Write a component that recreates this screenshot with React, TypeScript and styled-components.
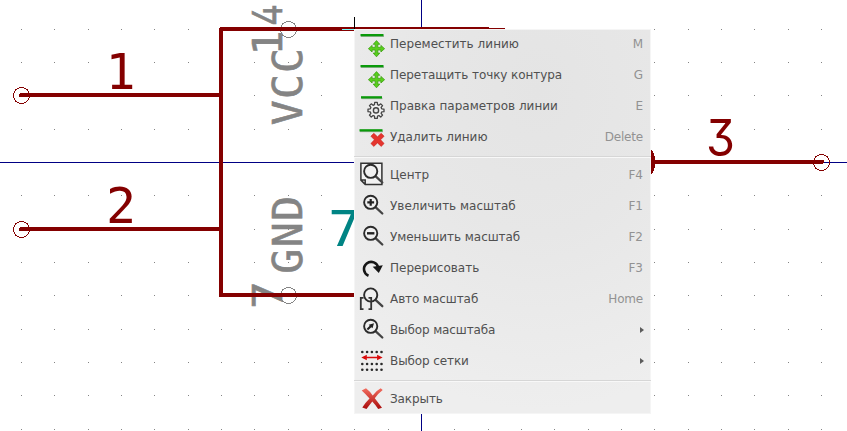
import React from "react";
import styled, { createGlobalStyle } from "styled-components";

const GlobalStyle = createGlobalStyle`
  body { margin: 0; background: #fff; overflow: hidden; }
`;

const Editor = styled.main`
  position: relative;
  width: 847px;
  height: 431px;
  overflow: hidden;
  background: #fff;
`;

const Canvas = styled.svg`
  display: block;
  width: 847px;
  height: 431px;
`;

const PinText = styled.text<{ $color?: string; $small?: boolean; $sans?: boolean }>`
  font-family: ${(p) => (p.$sans ? 'Inter, "DejaVu Sans", sans-serif' : '"DejaVu Sans Mono", monospace')};
  font-feature-settings: "cv09", "cv02";
  font-size: ${(p) => (p.$small ? 41.5 : 50)}px;
  font-weight: 400;
  fill: ${(p) => p.$color ?? "#840000"};
  stroke: ${(p) => (p.$small ? p.$color : "none")};
  stroke-width: 0.6px;
`;

const Menu = styled.nav`
  position: absolute;
  left: 354px;
  top: 29px;
  width: 297px;
  height: 385px;
  box-sizing: border-box;
  overflow: hidden;
  display: flex;
  flex-direction: column;
  background: radial-gradient(ellipse 270px 320px at 62% 16%, #e4e4e4 0%, #e7e7e7 45%, #eeeeee 100%);
  box-shadow: inset 0 1px #f5f5f5, inset -1px 0 #f5f5f5, inset 1px 0 #f5f5f5, inset 0 -1px #f5f5f5;
`;

const Item = styled.div`
  flex: 0 0 31px;
  display: flex;
  align-items: center;
  box-sizing: border-box;
  padding: 0 8px 1px 6px;
  font: 12px/30px "DejaVu Sans", sans-serif;
  color: #505050;
  white-space: nowrap;
`;

const Label = styled.span<{ $tracking?: number }>`
  flex: 1;
  margin-left: 6px;
  letter-spacing: ${(p) => p.$tracking ?? 0}px;
`;

const Shortcut = styled.span<{ $tight: boolean }>`
  color: #929292;
  letter-spacing: ${(p) => (p.$tight ? -0.2 : 0)}px;
`;

const Submenu = styled.i`
  margin: 0 -1px 0 0;
  border: solid transparent;
  border-width: 3.5px 0 3.5px 4px;
  border-left-color: #5c5c5c;
`;

const Separator = styled.hr`
  flex: 0 0 2px;
  box-sizing: border-box;
  width: 297px;
  margin: 3px 0 2px;
  border: 0;
  border-top: 1px solid #d6d6d6;
  border-bottom: 1px solid #f8f8f8;
`;

const Icon = styled.svg`
  flex: 0 0 24px;
  width: 24px;
  height: 24px;
  overflow: visible;
`;

type IconName =
  | "move" | "drag" | "edit" | "delete" | "center" | "zoomIn" | "zoomOut"
  | "redraw" | "auto" | "zoom" | "grid" | "close";

const Strip = ({ x = 0.5, y = 2, w = 23 }) => (
  <>
    <rect x={x + 0.5} y={y + 1.5} width={w} height="1.5" fill="#a9b5a9" />
    <rect x={x} y={y} width={w} height="2.3" fill="#0a9a0a" />
  </>
);

const Arrows = () => (
  <path
    d="M16.5 8.6l3.3 3.7h-2v3.1h3.1v-2l3.7 3.3-3.7 3.3v-2h-3.1v3.1h2l-3.3 3.7-3.3-3.7h2V18h-3.1v2l-3.7-3.3 3.7-3.3v2h3.1v-3.1h-2z"
    fill="#58cf1c" stroke="#3d9f13" strokeWidth=".8" strokeLinejoin="round"
  />
);

const Lens = ({ y = 8.3 }) => (
  <>
    <path d={`M15.5 ${y + 4.9}L22.3 ${y + 11.2}`} stroke="#444" strokeWidth="2.3" strokeLinecap="round" />
    <circle cx="10.7" cy={y} r="6.6" fill="#f0f0f0" stroke="#2b2b2b" strokeWidth="1.9" />
  </>
);

const gearPoints = Array.from({ length: 8 }, (_, i) =>
  [[-15, 5.9], [-9, 8.1], [9, 8.1], [15, 5.9]].map(([offset, r]) => {
    const a = ((i * 45 + offset) * Math.PI) / 180;
    return `${(16 + r * Math.cos(a)).toFixed(2)},${(16.4 + r * Math.sin(a)).toFixed(2)}`;
  }).join(" ")
).join(" ");

const drawings: Record<IconName, React.ReactNode> = {
  move: <><Strip /><Arrows /></>,
  drag: <><Strip /><Arrows /></>,
  edit: (
    <>
      <Strip x={1} w={21} y={2.2} />
      <polygon points={gearPoints} fill="#f0f0f0" stroke="#444" strokeWidth="1.3" strokeLinejoin="round" />
      <circle cx="16" cy="16.4" r="2.6" fill="#e9e9e9" stroke="#444" strokeWidth="1.4" />
    </>
  ),
  delete: (
    <>
      <Strip x={-0.5} y={4.2} />
      <path d="M13.8 8.3l3.7 3.5 3.7-3.5 2.9 2.9-3.5 3.6 3.5 3.7-2.9 2.9-3.7-3.5-3.7 3.5-2.9-2.9 3.5-3.7-3.5-3.6z" fill="#e4352e" stroke="#c9211c" strokeWidth=".6" strokeLinejoin="round" />
    </>
  ),
  center: (
    <>
      <path d="M.9.2h21v21.2H5.2L.9 17.1zM.9 17.1h4.3v4.3" fill="#f2f2f2" stroke="#333" strokeWidth="1.5" />
      <Lens />
    </>
  ),
  zoomIn: <><Lens /><path d="M7.3 8.3h6.8M10.7 4.9v6.8" stroke="#222" strokeWidth="2.2" /></>,
  zoomOut: <><Lens /><path d="M7 8.3h7.4" stroke="#222" strokeWidth="2.4" /></>,
  redraw: (
    <>
      <path d="M8.5 19.8A7.2 7.2 0 1 1 18.3 12" fill="none" stroke="#161616" strokeWidth="2.6" />
      <path d="M12.7 10.7L22.8 9.2 18.8 17z" fill="#161616" />
    </>
  ),
  auto: (
    <>
      <Lens y={8} />
      <path d="M3.5 10.8H.8v11.3h2.7M8.5 10.8h2.7v11.3H8.5" fill="none" stroke="#333" strokeWidth="1.8" />
    </>
  ),
  zoom: <><Lens /><path d="M14 5.2l-1.5 5-1.2-1-3.2 3-1.4-1.5 3-2.9-1-1.1z" fill="#222" /></>,
  grid: (
    <>
      {[3, 15, 20.8].map((y) => [2.3, 7.1, 11.9, 16.7, 21.5].map((x) => <circle key={`${x}-${y}`} cx={x} cy={y} r="1.3" fill="#2a2a2a" />))}
      <path d="M1.3 8.5L6.8 5.7v2h10.3v-2l5.5 2.8-5.5 2.8v-2H6.8v2z" fill="#d90b0b" />
    </>
  ),
  close: (
    <>
      <defs>
        <linearGradient id="closeRed" x1="0" y1="0" x2="0" y2="1">
          <stop offset="0" stopColor="#f36d5f" />
          <stop offset="1" stopColor="#a90c0c" />
        </linearGradient>
      </defs>
      <path d="M1.7 3.4L6 1.2Q10 4.3 12.7 8.5 16.5 3.5 20.7 1.3L22.7 3Q18 6.5 14.8 11.3 18 15.5 22 20.8L18.2 22Q15.3 17.5 12.3 14.4 9 18.5 6.5 22L2.3 20.6Q5.6 15.5 9.5 11.6 6 7.2 1.7 3.4z" fill="url(#closeRed)" />
    </>
  ),
};

type Entry = { icon: IconName; label: string; keys?: string; submenu?: boolean; tracking?: number };

const groups: Entry[][] = [
  [
    { icon: "move", label: "Переместить линию", keys: "M", tracking: 0.04 },
    { icon: "drag", label: "Перетащить точку контура", keys: "G", tracking: -0.07 },
    { icon: "edit", label: "Правка параметров линии", keys: "E" },
    { icon: "delete", label: "Удалить линию", keys: "Delete" },
  ],
  [
    { icon: "center", label: "Центр", keys: "F4" },
    { icon: "zoomIn", label: "Увеличить масштаб", keys: "F1" },
    { icon: "zoomOut", label: "Уменьшить масштаб", keys: "F2", tracking: -0.05 },
    { icon: "redraw", label: "Перерисовать", keys: "F3" },
    { icon: "auto", label: "Авто масштаб", keys: "Home", tracking: -0.08 },
    { icon: "zoom", label: "Выбор масштаба", submenu: true, tracking: -0.12 },
    { icon: "grid", label: "Выбор сетки", submenu: true, tracking: -0.1 },
  ],
  [{ icon: "close", label: "Закрыть", tracking: -0.1 }],
];

const gridX = Array.from({ length: 25 }, (_, i) => Math.round(21 + (i * 100) / 3));
const gridY = Array.from({ length: 13 }, (_, i) => Math.round(28.8 + (i * 100) / 3));

const Schematic = () => (
  <Canvas viewBox="0 0 847 431">
    <g shapeRendering="crispEdges">
      {gridY.map((y) => gridX.map((x) => <rect key={`${x}-${y}`} x={x} y={y} width="1" height="1" fill="#848484" />))}
      <path d="M0 162.5H847M421.5 0V431" stroke="#000084" fill="none" />
    </g>
    <PinText $small $color="#848484" transform="translate(302 125.3) rotate(-90)" letterSpacing="1.2">VCC</PinText>
    <PinText $small $color="#848484" transform="translate(302 273.7) rotate(-90)" letterSpacing="1.4">GND</PinText>
    <PinText $small $color="#848484" transform="translate(282 55.5) rotate(-90)">1</PinText>
    <PinText $small $sans $color="#848484" transform="translate(282 26) rotate(-90)" textLength="22" lengthAdjust="spacingAndGlyphs">4</PinText>
    <PinText $small $color="#848484" transform="translate(282 309) rotate(-90)" textLength="28" lengthAdjust="spacingAndGlyphs">7</PinText>
    <PinText $color="#008484" x="328" y="245.5" textLength="33" lengthAdjust="spacingAndGlyphs">7</PinText>
    <PinText x="105.5" y="89">1</PinText>
    <PinText x="106" y="222.5">2</PinText>
    <PinText $sans x="706" y="156" textLength="29" lengthAdjust="spacingAndGlyphs">3</PinText>
    <g shapeRendering="crispEdges">
      <path d="M21 95h200M21 229h200M650 162h172" stroke="#840000" strokeWidth="4" strokeLinecap="round" fill="none" />
      <path d="M489 29H221V295H360" stroke="#840000" strokeWidth="4" strokeLinejoin="round" fill="none" />
      <rect x="488" y="28" width="17" height="1" fill="#840000" />
      <path d="M650 148C657 153 657 171 650 176z" fill="#840000" />
      <g fill="none" stroke="#840000">
        <circle cx="21.5" cy="95.5" r="8" />
        <circle cx="21.5" cy="229.5" r="8" />
        <circle cx="821.5" cy="162.5" r="8" />
      </g>
      <g fill="none" stroke="#848484">
        <circle cx="288.5" cy="29.5" r="8" />
        <circle cx="288.5" cy="295.5" r="8" />
      </g>
      <rect x="280" y="27" width="18" height="4" fill="#840000" />
      <rect x="280" y="293" width="18" height="4" fill="#840000" />
      <rect x="342" y="29" width="13" height="1" fill="#7bffff" />
      <rect x="354" y="17" width="1" height="12" fill="#000" />
    </g>
  </Canvas>
);

export default function App() {
  return (
    <Editor>
      <GlobalStyle />
      <Schematic />
      <Menu>
        {groups.map((group, index) => (
          <React.Fragment key={index}>
            {index > 0 && <Separator />}
            {group.map((entry) => (
              <Item key={entry.icon}>
                <Icon viewBox="0 0 24 24">{drawings[entry.icon]}</Icon>
                <Label $tracking={entry.tracking}>{entry.label}</Label>
                {entry.keys && <Shortcut $tight={entry.keys.length > 2}>{entry.keys}</Shortcut>}
                {entry.submenu && <Submenu />}
              </Item>
            ))}
          </React.Fragment>
        ))}
      </Menu>
    </Editor>
  );
}
